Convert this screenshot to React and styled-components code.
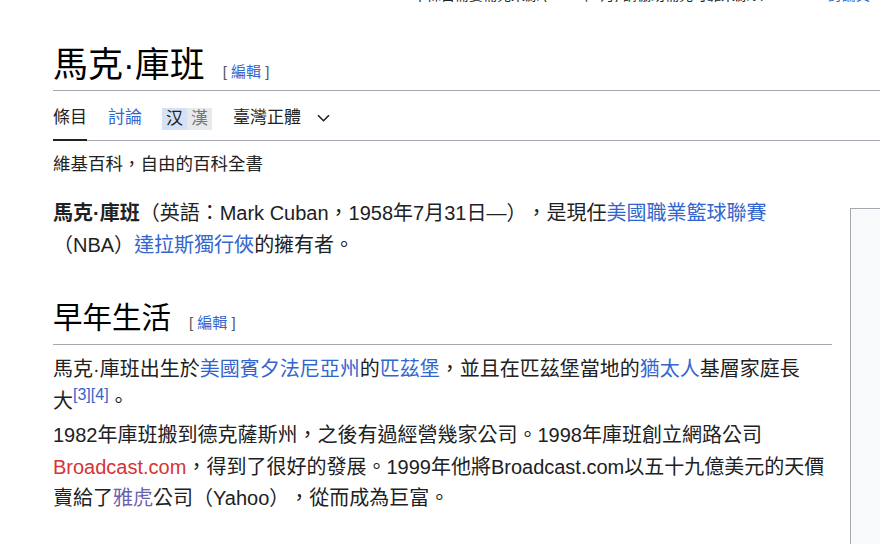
import styled, { createGlobalStyle } from "styled-components";

const GlobalStyle = createGlobalStyle`
  html, body {
    margin: 0;
    padding: 0;
    overflow: hidden;
    background: #fff;
  }
  body {
    font-family: "Liberation Sans", "Noto Sans CJK TC", sans-serif;
    color: #202122;
    text-spacing-trim: space-all;
  }
`;

const SPage = styled.div`
  width: 880px;
  height: 544px;
  overflow: hidden;
`;

// 上端只露出最後一行字的底部
const SNotice = styled.div`
  height: 2px;
  overflow: hidden;
  display: flex;
  align-items: flex-end;
  justify-content: flex-end;
  gap: 65px;
  padding-right: 10px;
  font-size: 14px;
  line-height: 14px;
  white-space: nowrap;
`;

const SContent = styled.div`
  width: 1100px;
  padding-left: 53px;
`;

const STitle = styled.h1`
  display: flex;
  align-items: baseline;
  margin: 38px 0 0;
  font-size: 35px;
  font-weight: 400;
  line-height: 50px;
  color: #000;
  border-bottom: 1px solid #a2a9b1;
`;

const SEditSection = styled.span`
  margin-left: 18px;
  font-size: 15px;
  line-height: 1;
  color: #54595d;
  white-space: pre;
`;

const SLink = styled.a`
  color: ${(p) => (p.$red ? "#d73333" : p.$visited ? "#6a60b0" : "#3366cc")};
  text-decoration: none;
  cursor: pointer;
`;

const STabs = styled.div`
  display: flex;
  border-bottom: 1px solid #a2a9b1;
`;

const STab = styled.div`
  display: flex;
  align-items: center;
  margin-right: ${(p) => p.$gap}px;
  padding: 17px 0 ${(p) => (p.$active ? 11 : 12)}px;
  font-size: 17px;
  line-height: 20px;
  color: ${(p) => (p.$link ? "#3366cc" : "#202122")};
  border-bottom: ${(p) => (p.$active ? "2px solid #202122" : "none")};
  margin-bottom: ${(p) => (p.$active ? -1 : 0)}px;
`;

const SVariant = styled.span`
  display: inline-flex;
  align-items: center;
  height: 22px;
  margin-bottom: -2px;
  padding: 0 4px;
  background: ${(p) => (p.$on ? "#d5e2f5" : "#e8e9eb")};
  color: ${(p) => (p.$on ? "#202122" : "#72777d")};
`;

const SChevron = styled.svg`
  width: 13px;
  height: 8px;
  margin-left: 16px;
`;

const STagline = styled.div`
  margin-top: 9px;
  font-size: 17.5px;
  line-height: 28px;
`;

const SBody = styled.div`
  display: flex;
  align-items: flex-start;
`;

const SMain = styled.div`
  flex: none;
  width: 779px;
`;

const SPara = styled.p`
  margin: ${(p) => p.$top}px 0 0;
  font-size: 20px;
  line-height: 31.5px;
`;

const SHeading = styled.h2`
  display: flex;
  align-items: baseline;
  margin: 36px 0 0;
  padding-bottom: 6px;
  font-size: 29.5px;
  font-weight: 400;
  line-height: 41px;
  color: #000;
  border-bottom: 1px solid #a2a9b1;
`;

const SNoWrap = styled.span`
  white-space: nowrap;
`;

const SSup = styled.sup`
  font-size: 16px;
  line-height: 0;
  vertical-align: 8px;
`;

const SInfobox = styled.div`
  flex: none;
  width: 300px;
  height: 420px;
  margin: 30px 0 0 18px;
  background: #f8f9fa;
  border: 1px solid #a2a9b1;
`;

const Edit = () => (
  <SEditSection>
    {"[ "}
    <SLink>編輯</SLink>
    {" ]"}
  </SEditSection>
);

export default function App() {
  return (
    <SPage lang="zh-Hant">
      <GlobalStyle />
      <SNotice>
        <span>本條目需要補充來源 (2018年1月) 請協助補充可靠來源以</span>
        <SLink>討論頁</SLink>
      </SNotice>

      <SContent>
        <STitle>
          馬克·庫班
          <Edit />
        </STitle>

        <STabs>
          <STab $active $gap={21}>條目</STab>
          <STab $link $gap={20}>討論</STab>
          <STab $gap={21}>
            <SVariant $on>汉</SVariant>
            <SVariant>漢</SVariant>
          </STab>
          <STab $gap={0}>
            臺灣正體
            <SChevron viewBox="0 0 13 8">
              <path d="M1 1.2l5.5 5.5 5.5-5.5" fill="none" stroke="#202122" strokeWidth="1.6" />
            </SChevron>
          </STab>
        </STabs>

        <STagline>維基百科，自由的百科全書</STagline>

        <SBody>
          <SMain>
            <SPara $top={20}>
              <b>馬克·庫班</b>（英語：Mark Cuban，1958年7月31日—），是現任
              <SLink>美國職業籃球聯賽</SLink>（NBA）<SLink>達拉斯獨行俠</SLink>的擁有者。
            </SPara>

            <SHeading>
              早年生活
              <Edit />
            </SHeading>

            <SPara $top={9}>
              馬克·庫班出生於<SLink>美國賓夕法尼亞州</SLink>的<SLink>匹茲堡</SLink>
              ，並且在匹茲堡當地的<SLink>猶太人</SLink>基層家庭長
              <SNoWrap>
                大
                <SSup>
                  <SLink>[3]</SLink>
                  <SLink>[4]</SLink>
                </SSup>
                。
              </SNoWrap>
            </SPara>

            <SPara $top={3}>
              1982年庫班搬到德克薩斯州，之後有過經營幾家公司。1998年庫班創立網路公司
              <SLink $red>Broadcast.com</SLink>
              ，得到了很好的發展。1999年他將Broadcast.com以五十九億美元的天價賣給了
              <SLink $visited>雅虎</SLink>公司（Yahoo），從而成為巨富。
            </SPara>
          </SMain>
          <SInfobox />
        </SBody>
      </SContent>
    </SPage>
  );
}
